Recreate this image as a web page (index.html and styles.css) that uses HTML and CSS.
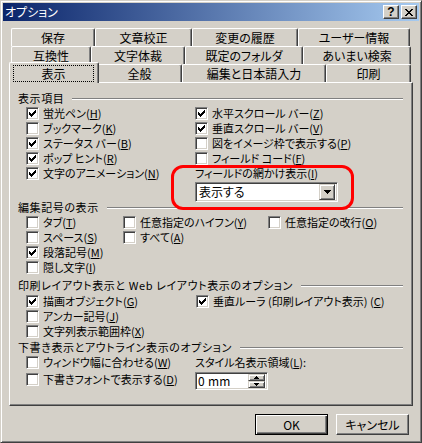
FILE: index.html
```html
<!DOCTYPE html>
<html lang="ja">
<head>
<meta charset="utf-8">
<title>オプション</title>
<link rel="stylesheet" href="styles.css">
</head>
<body>
<div class="window">
  <div class="titlebar">
    <span class="title">オプション</span>
    <div class="caption-btns">
      <span class="cbtn help">?</span>
      <span class="cbtn close"><svg width="8" height="7" viewBox="0 0 8 7"><path d="M0 0h2v1H0zM6 0h2v1H6zM1 1h2v1H1zM5 1h2v1H5zM2 2h4v1H2zM3 3h2v1H3zM2 4h4v1H2zM1 5h2v1H1zM5 5h2v1H5zM0 6h2v1H0zM6 6h2v1H6z"/></svg></span>
    </div>
  </div>
  <div class="body">
    <div class="tabs">
      <div class="tabrow r1">
        <div class="tab">保存</div>
        <div class="tab">文章校正</div>
        <div class="tab">変更の履歴</div>
        <div class="tab">ユーザー情報</div>
      </div>
      <div class="tabrow r2">
        <div class="tab">互換性</div>
        <div class="tab">文字体裁</div>
        <div class="tab">既定のフォルダ</div>
        <div class="tab">あいまい検索</div>
      </div>
      <div class="tabrow r3">
        <div class="tab sel"><span class="focus">表示</span></div>
        <div class="tab">全般</div>
        <div class="tab">編集と日本語入力</div>
        <div class="tab">印刷</div>
      </div>
    </div>
    <div class="panel">
      <div class="ghead"><span>表示項目</span><span class="rule"></span></div>
      <div class="grid g1">
        <div class="col">
          <div class="cb"><span class="box"><svg width="7" height="7" viewBox="0 0 7 7"><path d="M0 2H1V3H2V4H3V3H4V2H5V1H6V0H7V3H6V4H5V5H4V6H3V7H2V6H1V5H0Z"/></svg></span><span>蛍光ペン(<u>H</u>)</span></div>
          <div class="cb"><span class="box"></span><span>ブックマーク(<u>K</u>)</span></div>
          <div class="cb"><span class="box"><svg width="7" height="7" viewBox="0 0 7 7"><path d="M0 2H1V3H2V4H3V3H4V2H5V1H6V0H7V3H6V4H5V5H4V6H3V7H2V6H1V5H0Z"/></svg></span><span>ステータス バー(<u>B</u>)</span></div>
          <div class="cb"><span class="box"><svg width="7" height="7" viewBox="0 0 7 7"><path d="M0 2H1V3H2V4H3V3H4V2H5V1H6V0H7V3H6V4H5V5H4V6H3V7H2V6H1V5H0Z"/></svg></span><span>ポップ ヒント(<u>R</u>)</span></div>
          <div class="cb"><span class="box"><svg width="7" height="7" viewBox="0 0 7 7"><path d="M0 2H1V3H2V4H3V3H4V2H5V1H6V0H7V3H6V4H5V5H4V6H3V7H2V6H1V5H0Z"/></svg></span><span>文字のアニメーション(<u>N</u>)</span></div>
        </div>
        <div class="col">
          <div class="cb"><span class="box"><svg width="7" height="7" viewBox="0 0 7 7"><path d="M0 2H1V3H2V4H3V3H4V2H5V1H6V0H7V3H6V4H5V5H4V6H3V7H2V6H1V5H0Z"/></svg></span><span>水平スクロール バー(<u>Z</u>)</span></div>
          <div class="cb"><span class="box"><svg width="7" height="7" viewBox="0 0 7 7"><path d="M0 2H1V3H2V4H3V3H4V2H5V1H6V0H7V3H6V4H5V5H4V6H3V7H2V6H1V5H0Z"/></svg></span><span>垂直スクロール バー(<u>V</u>)</span></div>
          <div class="cb"><span class="box"></span><span>図をイメージ枠で表示する(<u>P</u>)</span></div>
          <div class="cb"><span class="box"></span><span>フィールド コード(<u>F</u>)</span></div>
          <div class="flabel">フィールドの網かけ表示(<u>I</u>)</div>
          <div class="combo"><span class="combo-text">表示する</span><span class="dd-btn"><svg width="7" height="4" viewBox="0 0 7 4"><path d="M0 0H7V1H6V2H5V3H4V4H3V3H2V2H1V1H0Z"/></svg></span></div>
        </div>
      </div>

      <div class="ghead"><span>編集記号の表示</span><span class="rule"></span></div>
      <div class="grid g2">
        <div class="col">
          <div class="cb"><span class="box"></span><span>タブ(<u>T</u>)</span></div>
          <div class="cb"><span class="box"></span><span>スペース(<u>S</u>)</span></div>
          <div class="cb"><span class="box"><svg width="7" height="7" viewBox="0 0 7 7"><path d="M0 2H1V3H2V4H3V3H4V2H5V1H6V0H7V3H6V4H5V5H4V6H3V7H2V6H1V5H0Z"/></svg></span><span>段落記号(<u>M</u>)</span></div>
          <div class="cb"><span class="box"></span><span>隠し文字(<u>I</u>)</span></div>
        </div>
        <div class="col">
          <div class="cb"><span class="box"></span><span>任意指定のハイフン(<u>Y</u>)</span></div>
          <div class="cb"><span class="box"></span><span>すべて(<u>A</u>)</span></div>
        </div>
        <div class="col">
          <div class="cb"><span class="box"></span><span>任意指定の改行(<u>O</u>)</span></div>
        </div>
      </div>

      <div class="ghead g3h"><span>印刷レイアウト表示と Web レイアウト表示のオプション</span><span class="rule"></span></div>
      <div class="grid g3">
        <div class="col">
          <div class="cb"><span class="box"><svg width="7" height="7" viewBox="0 0 7 7"><path d="M0 2H1V3H2V4H3V3H4V2H5V1H6V0H7V3H6V4H5V5H4V6H3V7H2V6H1V5H0Z"/></svg></span><span>描画オブジェクト(<u>G</u>)</span></div>
          <div class="cb"><span class="box"></span><span>アンカー記号(<u>J</u>)</span></div>
          <div class="cb"><span class="box"></span><span>文字列表示範囲枠(<u>X</u>)</span></div>
        </div>
        <div class="col">
          <div class="cb"><span class="box"><svg width="7" height="7" viewBox="0 0 7 7"><path d="M0 2H1V3H2V4H3V3H4V2H5V1H6V0H7V3H6V4H5V5H4V6H3V7H2V6H1V5H0Z"/></svg></span><span>垂直ルーラ (印刷レイアウト表示) (<u>C</u>)</span></div>
        </div>
      </div>

      <div class="ghead g4h"><span>下書き表示とアウトライン表示のオプション</span><span class="rule"></span></div>
      <div class="grid g4">
        <div class="col">
          <div class="cb"><span class="box"></span><span>ウィンドウ幅に合わせる(<u>W</u>)</span></div>
          <div class="cb second"><span class="box"></span><span>下書きフォントで表示する(<u>D</u>)</span></div>
        </div>
        <div class="col">
          <div class="flabel">スタイル名表示領域(<u>L</u>):</div>
          <div class="spin"><span class="spin-text">0 mm</span><span class="spin-btns"><span class="sbtn"><svg width="5" height="3" viewBox="0 0 5 3"><path d="M2 0H3V1H4V2H5V3H0V2H1V1H2Z"/></svg></span><span class="sbtn"><svg width="5" height="3" viewBox="0 0 5 3"><path d="M0 0H5V1H4V2H3V3H2V2H1V1H0Z"/></svg></span></span></div>
        </div>
      </div>

      <div class="annot"></div>
    </div>
    <div class="actions">
      <button class="btn default">OK</button>
      <button class="btn">キャンセル</button>
    </div>
  </div>
</div>
</body>
</html>
```

FILE: styles.css
```css
* { box-sizing: border-box; }
html, body { margin: 0; padding: 0; }
body {
  font-family: "Noto Sans CJK JP", "Noto Sans", sans-serif;
  font-size: 12px;
  color: #000;
  font-feature-settings: "palt";
  background: #d4d0c8;
}
u { text-decoration-thickness: 1px; text-underline-offset: 1px; }

.window {
  width: 422px;
  height: 443px;
  background: #d4d0c8;
  border: 1px solid;
  border-color: #d4d0c8 #404040 #404040 #d4d0c8;
  box-shadow: inset 1px 1px #fff, inset -1px -1px #808080;
  padding: 2px;
  display: flex;
  flex-direction: column;
}

.titlebar {
  height: 18px;
  flex: none;
  background: linear-gradient(to right, #0a246a, #a6caf0);
  display: flex;
  align-items: center;
  justify-content: space-between;
  padding: 0 2px 0 2px;
}
.title { color: #fff; line-height: 18px; }
.caption-btns { display: flex; gap: 2px; }
.cbtn {
  width: 16px;
  height: 14px;
  background: #d4d0c8;
  border: 1px solid;
  border-color: #fff #404040 #404040 #fff;
  box-shadow: inset -1px -1px #808080;
  display: flex;
  align-items: center;
  justify-content: center;
}
.cbtn svg { display: block; }
.help {
  font-family: "Liberation Sans", sans-serif;
  font-weight: bold;
  font-size: 12px;
  line-height: 12px;
}

.body {
  flex: 1;
  display: flex;
  flex-direction: column;
  padding: 7px 6px 0 6px;
}

.tabs { height: 54px; flex: none; display: flex; flex-direction: column; }
.tabrow { display: flex; height: 18px; padding-left: 2px; }
.tab {
  flex: none;
  height: 18px;
  border-top: 1px solid #fff;
  border-left: 1px solid #fff;
  border-right: 1px solid #404040;
  box-shadow: inset -1px 0 #808080;
  border-radius: 2px 2px 0 0;
  text-align: center;
  line-height: 17px;
  white-space: nowrap;
  background: #d4d0c8;
}
.r1 .tab:nth-child(1) { width: 84px; }
.r1 .tab:nth-child(2) { width: 97px; }
.r1 .tab:nth-child(3) { width: 106px; }
.r1 .tab:nth-child(4) { width: 112px; }
.r2 .tab:nth-child(1) { width: 80px; }
.r2 .tab:nth-child(2) { width: 94px; }
.r2 .tab:nth-child(3) { width: 118px; }
.r2 .tab:nth-child(4) { width: 108px; }
.r3 .tab:nth-child(1) { width: 90px; }
.r3 .tab:nth-child(2) { width: 85px; }
.r3 .tab:nth-child(3) { width: 144px; }
.r3 .tab:nth-child(4) { width: 85px; }

.tab.sel {
  height: 21px;
  margin: -2px -2px -1px -2px;
  padding: 2px 4px 1px 3px;
  position: relative;
  z-index: 1;
  display: flex;
  line-height: 15px;
}
.focus { flex: 1; border: 1px dotted #000; text-align: center; }

.panel {
  position: relative;
  height: 324px;
  flex: none;
  font-size: 11px;
  border: 1px solid;
  border-color: #fff #404040 #404040 #fff;
  box-shadow: inset -1px -1px #808080;
  padding: 8px 9px 0 0;
  display: flex;
  flex-direction: column;
}

.ghead {
  display: flex;
  align-items: center;
  height: 15px;
  line-height: 15px;
  padding-left: 8px;
  white-space: nowrap;
  letter-spacing: 0.6px;
}
.rule {
  flex: 1;
  height: 2px;
  margin-left: 8px;
  margin-top: 1px;
  border-top: 1px solid #808080;
  border-bottom: 1px solid #fff;
}
.g3h { margin-top: 3px; margin-bottom: 1px; }
.g4h { margin-top: 1px; }

.grid { display: grid; padding-left: 16px; }
.g1 { grid-template-columns: 169px 1fr; }
.g2 { grid-template-columns: 97px 145px 1fr; }
.g3 { grid-template-columns: 170px 1fr; }
.g4 { grid-template-columns: 169px 1fr; }

.col { display: flex; flex-direction: column; }
.cb {
  display: flex;
  align-items: center;
  gap: 4px;
  height: 15px;
  line-height: 15px;
  white-space: nowrap;
}
.cb.second { margin-top: 2px; }
.box {
  flex: none;
  width: 13px;
  height: 13px;
  background: #fff;
  border: 1px solid;
  border-color: #808080 #fff #fff #808080;
  box-shadow: inset 1px 1px #404040, inset -1px -1px #d4d0c8;
}
.box svg { display: block; margin: 2px; }

.flabel { height: 15px; line-height: 15px; white-space: nowrap; }

.combo {
  margin-top: 1px;
  margin-bottom: -2px;
  width: 143px;
  height: 20px;
  background: #fff;
  border: 1px solid;
  border-color: #808080 #fff #fff #808080;
  box-shadow: inset 1px 1px #404040, inset -1px -1px #d4d0c8;
  padding: 2px;
  display: flex;
  align-items: center;
}
.combo-text { flex: 1; padding-left: 1px; line-height: 16px; font-size: 12px; }
.dd-btn, .sbtn {
  flex: none;
  background: #d4d0c8;
  border: 1px solid;
  border-color: #d4d0c8 #404040 #404040 #d4d0c8;
  box-shadow: inset 1px 1px #fff, inset -1px -1px #808080;
  display: flex;
  align-items: center;
  justify-content: center;
}
.dd-btn { width: 16px; height: 16px; }
.dd-btn svg, .sbtn svg { display: block; }

.spin {
  margin-top: 2px;
  width: 73px;
  height: 18px;
  background: #fff;
  border: 1px solid;
  border-color: #808080 #fff #fff #808080;
  box-shadow: inset 1px 1px #404040, inset -1px -1px #d4d0c8;
  padding: 2px;
  display: flex;
  align-items: center;
}
.spin-text { flex: 1; line-height: 14px; font-size: 12px; letter-spacing: 0.3px; }
.spin-btns { display: flex; flex-direction: column; width: 17px; height: 14px; }
.sbtn { height: 7px; width: 17px; }

.annot {
  position: absolute;
  left: 161px;
  top: 82px;
  width: 183px;
  height: 45px;
  border: 3px solid #ff0000;
  border-radius: 12px;
  pointer-events: none;
}

.actions {
  display: flex;
  justify-content: flex-end;
  gap: 8px;
  margin-top: 8px;
  padding-right: 4px;
}
.btn {
  width: 73px;
  height: 21px;
  font: inherit;
  font-feature-settings: "palt";
  color: #000;
  background: #d4d0c8;
  border: 1px solid;
  border-color: #fff #404040 #404040 #fff;
  box-shadow: inset -1px -1px #808080;
  padding: 0;
  line-height: 19px;
  text-align: center;
}
.btn.default {
  border-color: #000;
  box-shadow: inset 1px 1px #fff, inset -1px -1px #404040, inset -2px -2px #808080;
}
```
